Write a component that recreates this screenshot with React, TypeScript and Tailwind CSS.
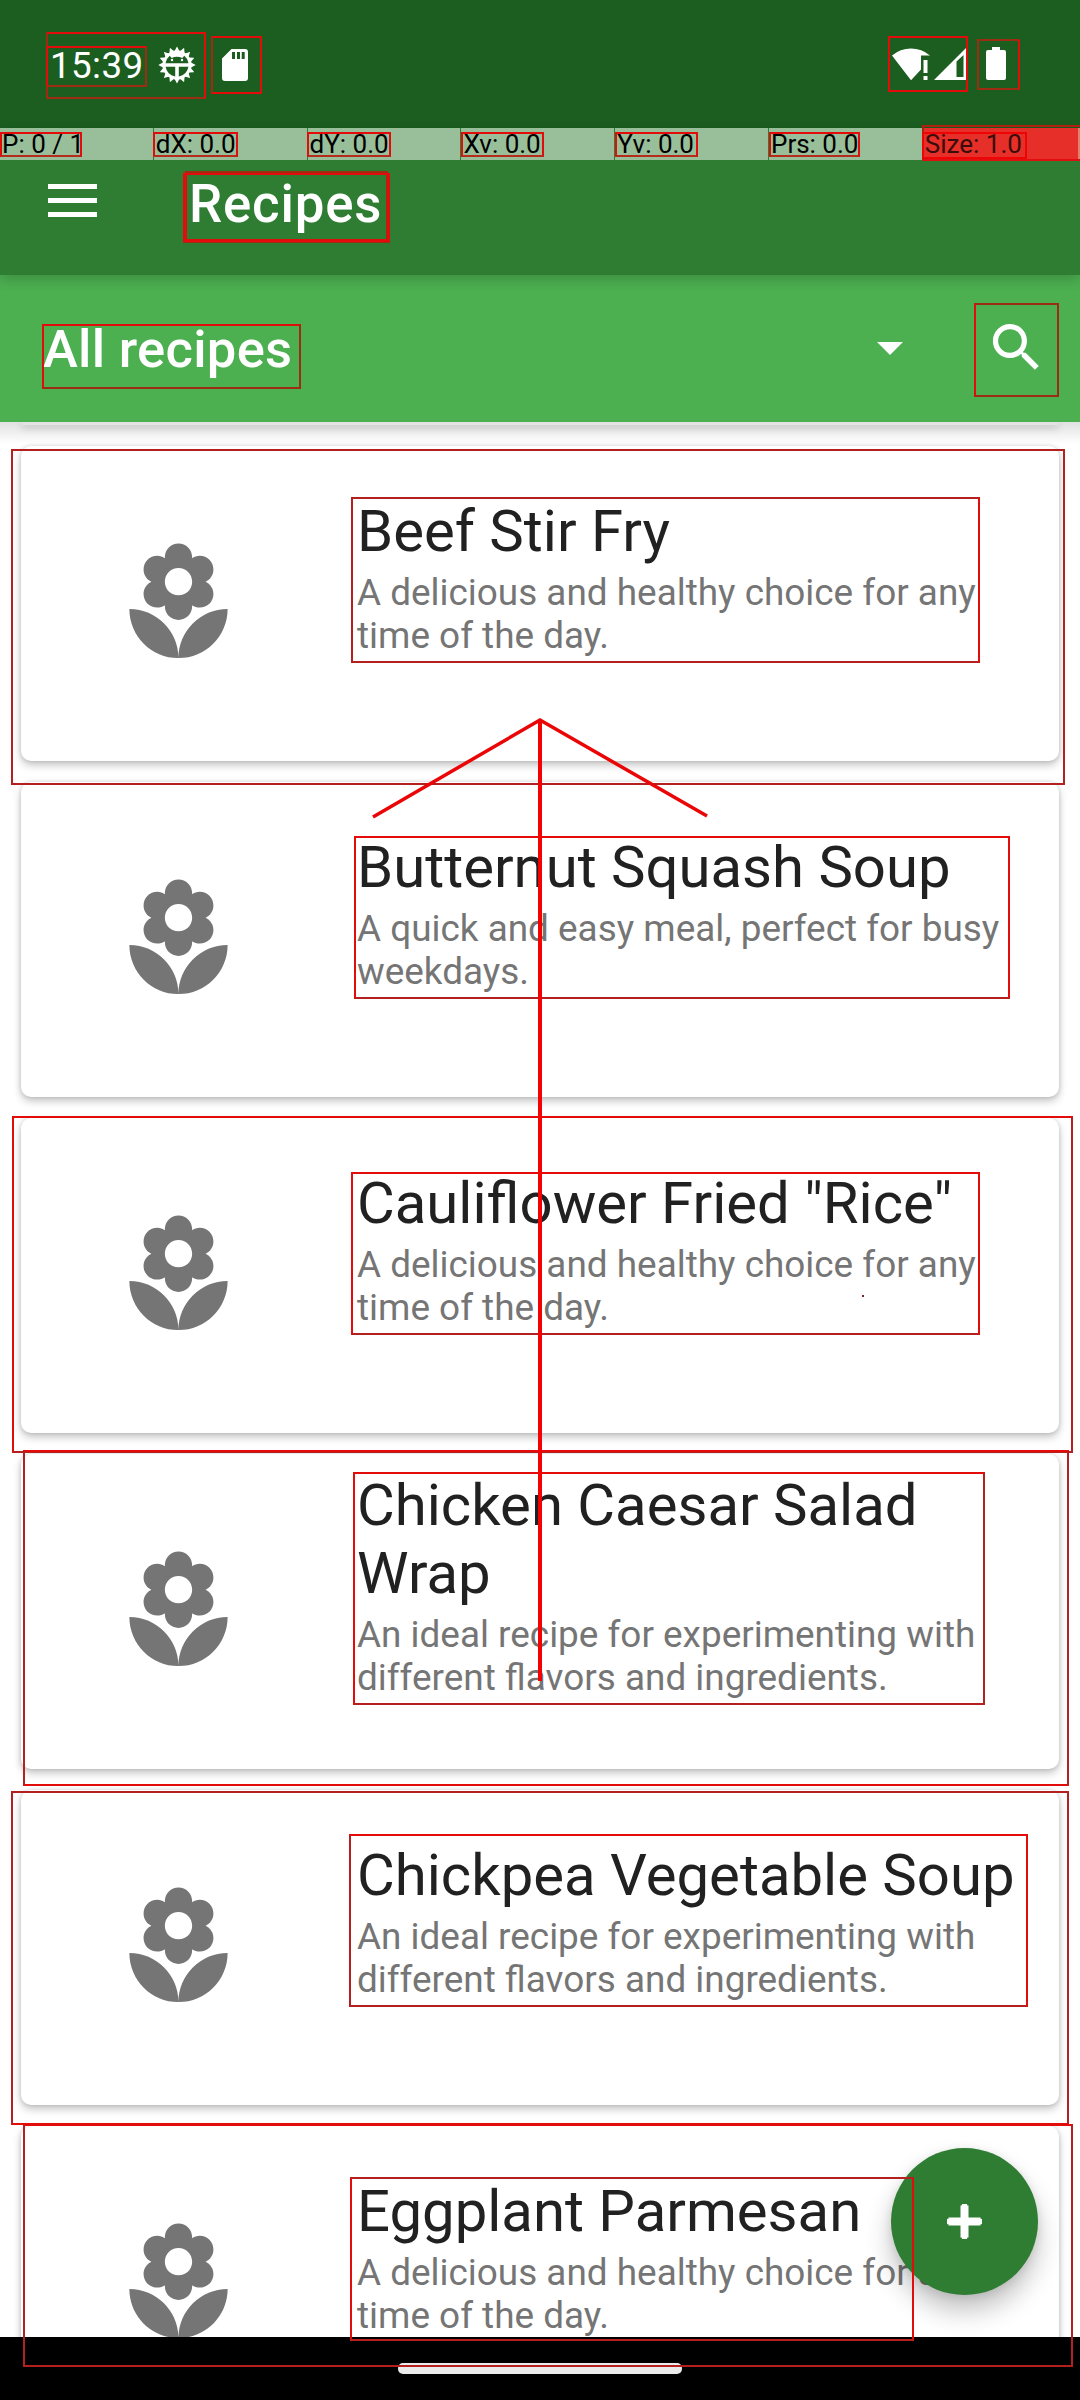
import React from "react";

type Recipe = { title: string; text: string };

const RECIPES: Recipe[] = [
  { title: "Beef Stir Fry", text: "A delicious and healthy choice for any time of the day." },
  { title: "Butternut Squash Soup", text: "A quick and easy meal, perfect for busy weekdays." },
  { title: 'Cauliflower Fried "Rice"', text: "A delicious and healthy choice for any time of the day." },
  { title: "Chicken Caesar Salad Wrap", text: "An ideal recipe for experimenting with different flavors and ingredients." },
  { title: "Chickpea Vegetable Soup", text: "An ideal recipe for experimenting with different flavors and ingredients." },
  { title: "Eggplant Parmesan", text: "A delicious and healthy choice for any time of the day." },
];

const POINTER = ["P: 0 / 1", "dX: 0.0", "dY: 0.0", "Xv: 0.0", "Yv: 0.0", "Prs: 0.0", "Size: 1.0"];

const R = "#e20c0a";
const D = "#b42020";
const M = "#9c2c12";

// Bounds of each highlighted view: left, top, right, bottom, then border colours (top, right, bottom, left)
type Box = [number, number, number, number, string, string, string, string];
const BOXES: Box[] = [
  [46, 32, 206, 99, R, R, M, M],
  [46, 46, 147, 87, R, M, M, R],
  [211, 36, 262, 94, R, R, R, M],
  [888, 36, 968, 92, R, R, R, R],
  [977, 39, 1020, 90, M, R, M, M],
  [0, 132, 82, 157, R, R, "#b52c1c", R],
  [153, 132, 238, 157, R, R, "#b52c1c", R],
  [307, 132, 391, 157, R, R, "#b52c1c", R],
  [461, 132, 544, 157, R, R, "#b52c1c", R],
  [615, 132, 698, 157, R, R, "#b52c1c", R],
  [769, 132, 860, 157, R, R, "#b52c1c", R],
  [922, 132, 1027, 159, "#ee0404", "#ee0404", "#ee0404", "#ee0404"],
  [183, 173, 390, 243, R, R, M, R],
  [185, 171, 388, 241, M, M, R, R],
  [184, 173, 389, 242, R, R, R, R],
  [42, 324, 301, 389, R, M, M, R],
  [974, 303, 1059, 397, M, M, M, R],
  [11, 449, 1065, 785, D, D, D, D],
  [351, 497, 980, 663, D, R, D, D],
  [354, 836, 1010, 999, R, R, D, R],
  [12, 1116, 1073, 1453, R, D, D, R],
  [351, 1172, 980, 1335, R, R, D, R],
  [23, 1450, 1069, 1786, R, D, R, D],
  [353, 1472, 985, 1705, R, D, D, R],
  [11, 1791, 1069, 2125, D, D, R, D],
  [349, 1834, 1028, 2007, R, R, D, D],
  [23, 2124, 1073, 2367, R, D, D, D],
  [350, 2177, 914, 2341, D, R, D, R],
];

function BugIcon() {
  const teeth = 16;
  const points = Array.from({ length: teeth * 4 }, (_, i) => {
    const a = ((i - 0.5) / (teeth * 4)) * Math.PI * 2;
    const r = i % 4 < 2 ? 18.3 : 14.6;
    const shift = i % 4 === 0 ? 0.04 : i % 4 === 1 ? -0.04 : 0;
    return `${(19 + r * Math.cos(a + shift)).toFixed(2)},${(19 + r * Math.sin(a + shift)).toFixed(2)}`;
  }).join(" ");
  return (
    <svg className="ml-[17px] h-[38px] w-[38px]" viewBox="0 0 38 38">
      <polygon points={points} fill="#fff" />
      <path d="M7.5 17.2a11.7 11.7 0 0 1 4.2-7.4l2 2.2a13 13 0 0 1 10.6 0l2-2.2a11.7 11.7 0 0 1 4.2 7.4z" fill="#1b5e20" />
      <circle cx="14" cy="14" r="1.2" fill="#fff" />
      <circle cx="24" cy="14" r="1.2" fill="#fff" />
      <path d="M7.6 20.8h9.6v9.6a11.7 11.7 0 0 1-9.6-9.6zM20.8 20.8h9.6a11.7 11.7 0 0 1-9.6 9.6z" fill="#1b5e20" />
    </svg>
  );
}

function StatusBar() {
  return (
    <header className="flex h-32 shrink-0 items-start bg-[#1b5e20] pl-[50px] text-white">
      <span className="mt-[44px] w-[91px] text-[36.75px] leading-[44px] tracking-[0.4px] whitespace-nowrap">15:39</span>
      <div className="mt-[46px]">
        <BugIcon />
      </div>
      <svg className="mt-[49px] ml-[26px] h-8 w-[26px]" viewBox="0 0 26 32">
        <path fillRule="evenodd" fill="#fff" d="M9.5 0H23a3 3 0 0 1 3 3v26a3 3 0 0 1-3 3H3a3 3 0 0 1-3-3V9.500zM10 3v7h3V3zM15 3v7h3V3zM19.700 3v7h3V3z" />
      </svg>
      <svg className="mt-[46px] ml-[644px] h-[35px] w-[75px]" viewBox="0 0 75 35">
        <path fill="#fff" d="M0 9.500A29 29 0 0 1 38 9.500H29v14L19 34.200z" />
        <path fill="#fff" d="M31.500 14h4v13h-4zM31.500 30h4v4h-4z" />
        <path fill="#fff" fillRule="evenodd" d="M42 34L74 2v32zM64.500 15.500V31h7V9z" />
      </svg>
      <svg className="mt-[47px] ml-[19px] h-[33px] w-5" viewBox="0 0 20 33">
        <path fill="#fff" d="M6 0h8v3h4a2 2 0 0 1 2 2v26a2 2 0 0 1-2 2H2a2 2 0 0 1-2-2V5a2 2 0 0 1 2-2h4z" />
      </svg>
    </header>
  );
}

function PointerBar() {
  return (
    <div className="absolute top-32 left-0 z-20 flex h-8 w-full overflow-hidden">
      {POINTER.map((label, i) => (
        <div
          key={label}
          className={
            i === 6
              ? "h-full w-[155px] shrink-0 bg-[#e62f28] pl-[2px] text-[26px] leading-[33px] whitespace-nowrap text-[#3a0c0a]"
              : "mr-px h-full w-[152.800px] shrink-0 bg-[#98bf9a] pl-[2px] text-[26px] leading-[33px] whitespace-nowrap text-black"
          }
        >
          {label}
        </div>
      ))}
      <div className="h-full w-[3px] bg-[#e5806f]" />
    </div>
  );
}

function RecipeCard({ title, text }: Recipe) {
  return (
    <article className="flex h-[315px] shrink-0 items-center rounded-[10px] bg-white shadow-[0_4px_9px_rgba(0,0,0,0.24),0_0_4px_rgba(0,0,0,0.12)]">
      <svg className="ml-[92px] h-[131px] w-[131px] shrink-0 fill-[#757575]" viewBox="0 0 24 24">
        <path d="M12 22c4.970 0 9-4.030 9-9-4.970 0-9 4.030-9 9zM5.600 10.250c0 1.380 1.120 2.500 2.500 2.500.530 0 1.010-.160 1.420-.440l-.020.190c0 1.380 1.120 2.500 2.500 2.500s2.500-1.120 2.500-2.500l-.020-.190c.400.280.890.440 1.420.440 1.380 0 2.500-1.120 2.500-2.500 0-1-.590-1.850-1.430-2.250.840-.400 1.430-1.250 1.430-2.250 0-1.380-1.120-2.500-2.500-2.500-.530 0-1.010.160-1.420.440l.020-.190C14.500 2.120 13.380 1 12 1S9.500 2.120 9.500 3.500l.020.190c-.400-.280-.890-.440-1.420-.440-1.380 0-2.500 1.120-2.500 2.500 0 1 .590 1.850 1.430 2.250-.840.400-1.430 1.250-1.430 2.250zM12 5.500c1.380 0 2.500 1.120 2.500 2.500s-1.120 2.500-2.500 2.500S9.500 9.380 9.500 8s1.120-2.500 2.500-2.500zM3 13c0 4.970 4.030 9 9 9 0-4.970-4.030-9-9-9z" />
      </svg>
      <div className="ml-[113px] w-[665px] pb-[54px]">
        <h2 className="text-[58.050px] leading-[68px] text-[#212121]">{title}</h2>
        <p className="mt-[6px] text-[36.900px] leading-[43px] text-[#757575]">{text}</p>
      </div>
    </article>
  );
}

function Highlights() {
  return (
    <div className="pointer-events-none absolute inset-0 z-40">
      <div className="absolute top-[125px] left-[922px] h-9 w-[160px] border-2 border-[#b0200f] border-b-[#e01010]" />
      {BOXES.map(([l, t, r, b, ct, cr, cb, cl], i) => (
        <div
          key={i}
          className="absolute border-2"
          style={{ left: l, top: t, width: r - l, height: b - t, borderColor: `${ct} ${cr} ${cb} ${cl}` }}
        />
      ))}
      <div className="absolute top-[1295px] left-[862px] h-0.5 w-0.5 bg-[#7c2424]" />
      <svg className="absolute top-0 left-0 h-full w-full" viewBox="0 0 1080 2400" fill="none">
        <path d="M540 720V1681" stroke="#f40202" strokeWidth="4" />
        <path d="M373 817L540 720L707 816" stroke="#ea0606" strokeWidth="3.500" />
      </svg>
    </div>
  );
}

export default function App() {
  return (
    <div className="relative flex h-[2400px] w-[1080px] flex-col overflow-hidden bg-white font-['Roboto',sans-serif]">
      <StatusBar />
      <PointerBar />
      <div className="relative z-10 flex h-[147px] shrink-0 items-center bg-[#2e7d32] pl-12 text-white shadow-[0_4px_12px_rgba(0,0,0,0.2)]">
        <svg className="mb-[2px] h-[33px] w-[49px]" viewBox="0 0 49 33">
          <path fill="#fff" d="M0 0h49v5H0zM0 14h49v5H0zM0 28h49v5H0z" />
        </svg>
        <h1 className="mt-[4px] ml-[92px] text-[52.800px] leading-[62px] font-medium tracking-[0.8px]">Recipes</h1>
      </div>
      <div className="relative flex h-[147px] shrink-0 items-center bg-[#4caf50] pl-[43px] text-white">
        <span className="mt-px w-[834px] text-[52.500px] leading-[62px] font-medium tracking-[0.28px]">All recipes</span>
        <svg className="h-[13px] w-[26px]" viewBox="0 0 26 13">
          <path fill="#fff" d="M0 0h26L13 13z" />
        </svg>
        <svg className="mb-[3px] ml-[82px] h-[63px] w-[63px]" viewBox="0 0 24 24">
          <path fill="#fff" d="M15.500 14h-.790l-.280-.270C15.410 12.590 16 11.110 16 9.500 16 5.910 13.090 3 9.500 3S3 5.910 3 9.500 5.910 16 9.500 16c1.610 0 3.090-.590 4.230-1.570l.270.280v.790l5 4.990L20.490 19l-4.990-5zm-6 0C7.010 14 5 11.990 5 9.500S7.010 5 9.500 5 14 7.010 14 9.500 11.990 14 9.500 14z" />
        </svg>
      </div>
      <main className="relative flex h-[1915px] shrink-0 flex-col gap-[21px] overflow-hidden px-[21px]">
        <div className="h-[3px] shrink-0 rounded-b-[10px] bg-white shadow-[0_3px_7px_rgba(0,0,0,0.24)]" />
        {RECIPES.map((r) => (
          <RecipeCard key={r.title} {...r} />
        ))}
        <div className="absolute top-0 left-0 h-[22px] w-full bg-linear-to-b from-black/12 to-transparent" />
        <button
          aria-label="Add recipe"
          className="absolute top-[1726px] left-[891px] flex h-[147px] w-[147px] items-center justify-center rounded-full bg-[#2e7d32] shadow-[0_16px_26px_rgba(0,0,0,0.24),0_2px_10px_rgba(0,0,0,0.1)]"
        >
          <svg className="h-[35px] w-[35px]" viewBox="0 0 35 35">
            <path d="M17.500 1.500v32M1.500 17.500h32" stroke="#fff" strokeWidth="8" />
            <path d="M17.500 1.500v32M1.500 17.500h32" stroke="#fff" strokeWidth="5.500" strokeLinecap="round" />
          </svg>
        </button>
      </main>
      <footer className="flex h-[63px] shrink-0 items-start justify-center bg-black pt-[26px]">
        <div className="h-[11px] w-[284px] rounded-[5px] bg-[#ebebeb]" />
      </footer>
      <Highlights />
    </div>
  );
}
